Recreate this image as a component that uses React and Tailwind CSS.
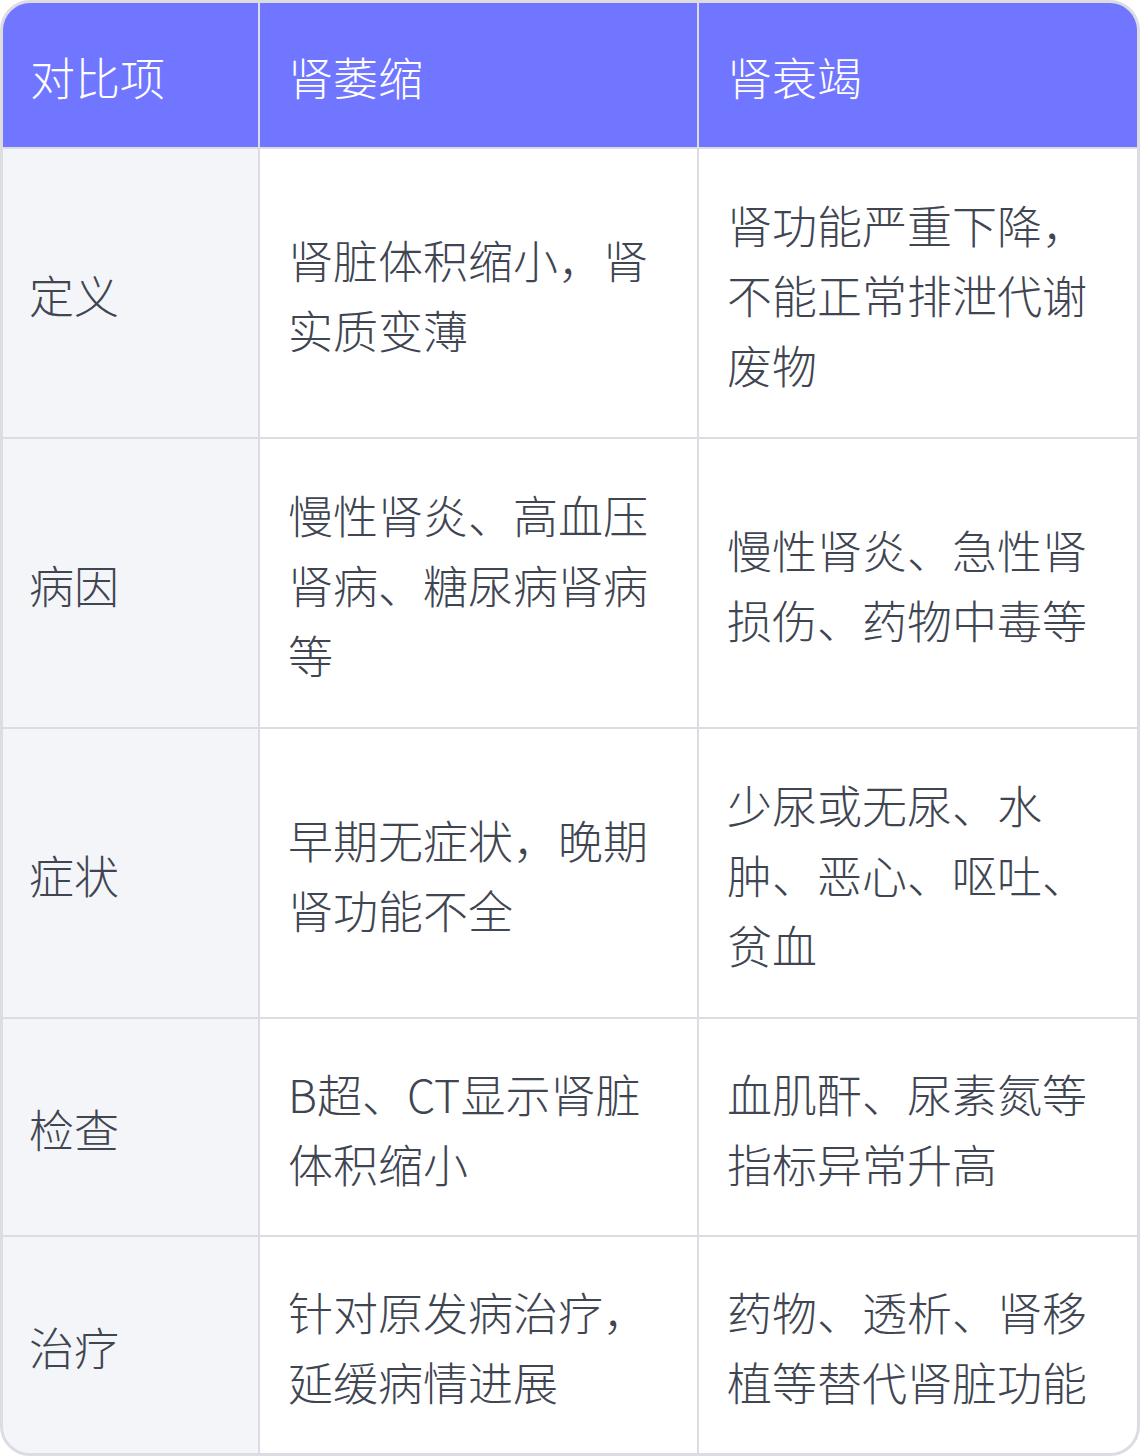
import React from 'react';

const rows = [
  { label: '定义', a: '肾脏体积缩小，肾实质变薄', b: '肾功能严重下降，不能正常排泄代谢废物' },
  { label: '病因', a: '慢性肾炎、高血压肾病、糖尿病肾病等', b: '慢性肾炎、急性肾损伤、药物中毒等' },
  { label: '症状', a: '早期无症状，晚期肾功能不全', b: '少尿或无尿、水肿、恶心、呕吐、贫血' },
  { label: '检查', a: 'B超、CT显示肾脏体积缩小', b: '血肌酐、尿素氮等指标异常升高' },
  { label: '治疗', a: '针对原发病治疗，延缓病情进展', b: '药物、透析、肾移植等替代肾脏功能' },
];

export default function App() {
  return (
    <div
      className="w-[1140px] h-[1456px] bg-white"
      style={{ fontFamily: '"Noto Sans CJK SC", "Noto Sans", sans-serif' }}
    >
      <div className="h-full rounded-[30px] border-[3px] border-[#dcdde3] overflow-hidden">
        <div className="grid h-full grid-cols-[255px_437px_438px] grid-rows-[144px_288px_288px_288px_216px_216px] gap-[2px] bg-[#dcdde3] text-[45px] leading-[70px] font-light">
          {['对比项', '肾萎缩', '肾衰竭'].map((h, i) => (
            <div
              key={h}
              className={`flex items-center bg-[#7076ff] pt-[3px] text-white ${i === 0 ? 'pl-[27px]' : 'pl-[28px]'} pr-[20px]`}
            >
              {h}
            </div>
          ))}
          {rows.map((r) => (
            <React.Fragment key={r.label}>
              <div className="flex items-center bg-[#f4f5f9] pt-[3px] pl-[26px] pr-[20px] text-[#404552]">{r.label}</div>
              <div className="flex items-center bg-white pt-[3px] pl-[28px] pr-[20px] text-[#404552]">{r.a}</div>
              <div className="flex items-center bg-white pt-[3px] pl-[28px] pr-[20px] text-[#404552]">{r.b}</div>
            </React.Fragment>
          ))}
        </div>
      </div>
    </div>
  );
}
